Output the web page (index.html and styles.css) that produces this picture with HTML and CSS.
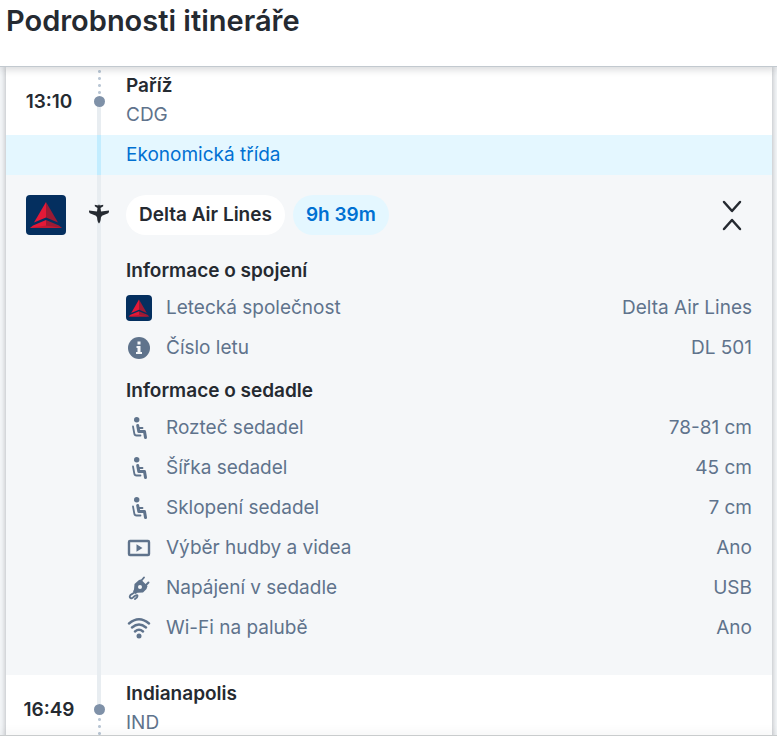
FILE: index.html
```html
<!DOCTYPE html>
<html lang="cs">
<head>
  <meta charset="UTF-8">
  <meta name="viewport" content="width=device-width, initial-scale=1.0">
  <title>Podrobnosti itineráře</title>
  <link rel="stylesheet" href="styles.css">
</head>
<body>
  <svg class="sprite" aria-hidden="true">
    <symbol id="delta" viewBox="0 0 40 40">
      <path d="M0 0h40v40H0z" fill="#042f5f"/>
      <path d="M20 7 8 27.500 20 22.500Z" fill="#e31937"/>
      <path d="M20 7 32 27.500 20 22.500Z" fill="#9b1b34"/>
      <path d="M20 25 7 30.500 4 33h16Z" fill="#e31937"/>
      <path d="M20 25 33 30.500 36 33H20Z" fill="#9b1b34"/>
      <path d="M4 33 20 30.500 36 33Z" fill="#c01933"/>
    </symbol>
    <symbol id="seat" viewBox="0 0 26 26">
      <circle cx="10.700" cy="4.700" r="2.700"/>
      <path d="M11.700 10.500 12.800 16.500H18.500L19.500 22.500" fill="none" stroke="currentColor" stroke-width="3" stroke-linecap="round" stroke-linejoin="round"/>
      <path d="M12.500 13h4M7 11.500 8.300 18.500Q8.600 20.500 10.500 20.500H14.500" fill="none" stroke="currentColor" stroke-width="1.800" stroke-linecap="round"/>
    </symbol>
  </svg>

  <header class="header">
    <h1 class="title">Podrobnosti itineráře</h1>
  </header>

  <main class="content">
    <div class="card">
      <section class="row">
        <div class="side"><time class="time">13:10</time></div>
        <div class="rail"><span class="dots"></span><span class="dot"></span><span class="line"></span></div>
        <div class="stop">
          <p class="city">Paříž</p>
          <p class="code">CDG</p>
        </div>
      </section>

      <div class="row cabin">
        <div class="side"></div>
        <div class="rail"><span class="line"></span></div>
        <p class="cabinName">Ekonomická třída</p>
      </div>

      <section class="row segment">
        <div class="side">
          <svg class="logo" role="img" aria-label="Delta Air Lines"><use href="#delta"/></svg>
        </div>
        <div class="rail">
          <span class="line"></span>
          <svg class="plane" viewBox="0 0 20 20" aria-hidden="true">
            <path d="M10 19.500c-1.100-1-1.800-3-1.900-6L7 11.800.8 9.300Q-.2 8.300 0 6.500L8 7.500 8.500 4 5.800 2.300V.800L9.200 1.400 10 .3l.8 1.100 3.400-.6V2.300L11.500 4 12 7.500l8-1q.2 1.800-.8 2.800L13 11.800l-1.100 1.700C11.800 16.500 11.100 18.500 10 19.500Z"/>
          </svg>
        </div>
        <div class="details">
          <div class="summary">
            <span class="pill">Delta Air Lines</span>
            <span class="pill duration">9h 39m</span>
            <button class="toggle" type="button" aria-label="Sbalit">
              <svg viewBox="0 0 24 32"><path d="m4 3 8 9 8-9M4 30l8-9 8 9"/></svg>
            </button>
          </div>

          <h2 class="groupTitle">Informace o spojení</h2>
          <dl class="list">
            <div class="item">
              <dt><svg class="icon airline"><use href="#delta"/></svg>Letecká společnost</dt>
              <dd>Delta Air Lines</dd>
            </div>
            <div class="item">
              <dt>
                <svg class="icon" viewBox="0 0 26 26"><circle cx="13" cy="13" r="11"/><path d="M11.500 6.500h3v3h-3zM10.500 11h4v6h1.500v2h-6v-2h1.500v-4h-1z" fill="#f5f7f9"/></svg>
                Číslo letu
              </dt>
              <dd>DL 501</dd>
            </div>
          </dl>

          <h2 class="groupTitle">Informace o sedadle</h2>
          <dl class="list">
            <div class="item">
              <dt><svg class="icon"><use href="#seat"/></svg>Rozteč sedadel</dt>
              <dd>78-81 cm</dd>
            </div>
            <div class="item">
              <dt><svg class="icon"><use href="#seat"/></svg>Šířka sedadel</dt>
              <dd>45 cm</dd>
            </div>
            <div class="item">
              <dt><svg class="icon"><use href="#seat"/></svg>Sklopení sedadel</dt>
              <dd>7 cm</dd>
            </div>
            <div class="item">
              <dt>
                <svg class="icon" viewBox="0 0 26 26"><rect x="3" y="6" width="20" height="14" rx="1" fill="none" stroke="currentColor" stroke-width="2.400"/><path d="M10.500 9.200v7.600l6-3.800z"/></svg>
                Výběr hudby a videa
              </dt>
              <dd>Ano</dd>
            </div>
            <div class="item">
              <dt>
                <svg class="icon" viewBox="0 0 26 26">
                  <path d="M13 5 15 4.500 21.500 11 20.500 14 17 17.500 11.500 17.800 9.500 19 7 16.500 8 14.500 8.500 9Z"/>
                  <path d="M15 6l3-3.500M19.500 10.500l3-3M8.500 17.500 4.500 20q-1.500 2 0 3t3-1l2-1.500q2-1 2 .5t-2.500 3" fill="none" stroke="currentColor" stroke-width="1.900" stroke-linecap="round"/>
                  <circle cx="14" cy="12" r="2" fill="#f5f7f9"/>
                </svg>
                Napájení v sedadle
              </dt>
              <dd>USB</dd>
            </div>
            <div class="item">
              <dt>
                <svg class="icon" viewBox="0 0 26 26"><g fill="none" stroke="currentColor" stroke-width="2.400" stroke-linecap="round"><path d="M3 8.500q10-8.500 20 0M6 12.500q7-6 14 0M9 16.500q4-3.500 8 0"/></g><circle cx="13" cy="21" r="2.500"/></svg>
                Wi-Fi na palubě
              </dt>
              <dd>Ano</dd>
            </div>
          </dl>
        </div>
      </section>

      <section class="row">
        <div class="side"><time class="time">16:49</time></div>
        <div class="rail"><span class="line"></span><span class="dot"></span><span class="dots"></span></div>
        <div class="stop">
          <p class="city">Indianapolis</p>
          <p class="code">IND</p>
        </div>
      </section>
    </div>
  </main>
  <footer class="footer"></footer>
</body>
</html>
```

FILE: styles.css
```css
* {
  box-sizing: border-box;
}

html, body {
  margin: 0;
  height: 100%;
}

body {
  display: flex;
  flex-direction: column;
  overflow: hidden;
  font-family: Inter, "Liberation Sans", sans-serif;
  font-size: 19px;
  line-height: 29px;
  color: #252a31;
  background-color: #f5f7f9;
}

h1, h2, p, dl, dd {
  margin: 0;
}

.sprite {
  display: none;
}

.header {
  position: relative;
  z-index: 1;
  padding: 3px 6px 27px;
  background-color: #fff;
  border-bottom: 1px solid #c2c9cf;
  box-shadow: 0 2px 8px rgba(37, 42, 49, 0.2);
}

.title {
  font-size: 29px;
  line-height: 36px;
  font-weight: 600;
}

.content {
  flex: 1;
  min-height: 0;
  padding: 0 5px 0 6px;
  overflow: hidden;
}

.card {
  background-color: #fff;
  box-shadow: 0 0 6px rgba(37, 42, 49, 0.35);
}

.footer {
  position: relative;
  height: 1px;
  background-color: #c9cccd;
  box-shadow: 0 0 10px rgba(37, 42, 49, 0.35);
}

.row {
  display: grid;
  grid-template-columns: 86px 14px 1fr;
  padding-right: 20px;
}

.side {
  display: flex;
  align-items: center;
  justify-content: center;
}

.time,
.city,
.groupTitle {
  font-weight: 600;
}

.rail {
  display: flex;
  flex-direction: column;
  align-items: center;
}

.line {
  flex: 1;
  width: 4px;
  background-color: #e8edf1;
}

.dot {
  width: 11px;
  height: 11px;
  border-radius: 50%;
  background-color: #7f91a8;
}

.dots {
  flex: 1;
  width: 3px;
  background: radial-gradient(circle, #bac7d5 1px, transparent 2px) 0 1px / 3px 7px;
}

.stop {
  padding: 4px 0 6px 20px;
}

.code {
  color: #5f738c;
}

.cabin {
  background-color: #e4f7ff;
}

.cabin .line {
  background-color: #c3edff;
}

.cabinName {
  padding-left: 20px;
  line-height: 40px;
  color: #0070d2;
}

.segment {
  background-color: #f5f7f9;
}

.segment .side {
  align-items: flex-start;
  justify-content: flex-start;
  padding: 20px 0 0 20px;
}

.segment .rail {
  position: relative;
}

.logo {
  width: 40px;
  height: 40px;
  border-radius: 4px;
}

.plane {
  position: absolute;
  top: 29px;
  width: 20px;
  height: 20px;
  fill: #252a31;
}

.details {
  padding: 20px 0 27px 20px;
}

.summary {
  display: flex;
  gap: 8px;
  margin-bottom: 13px;
}

.pill {
  padding: 0 13px;
  border-radius: 20px;
  line-height: 40px;
  font-weight: 600;
  background-color: #fff;
}

.duration {
  color: #0070d2;
  background-color: #e4f7ff;
}

.toggle {
  display: flex;
  align-items: center;
  justify-content: center;
  width: 40px;
  height: 40px;
  margin-left: auto;
  padding: 0;
  border: 0;
  background: none;
  cursor: pointer;
}

.toggle svg {
  width: 24px;
  height: 32px;
  fill: none;
  stroke: #252a31;
  stroke-width: 2.500;
  stroke-linecap: round;
  stroke-linejoin: round;
}

.groupTitle {
  padding-top: 6px;
  font-size: 19px;
  line-height: 34px;
}

.item {
  display: flex;
  justify-content: space-between;
  line-height: 40px;
  color: #5f738c;
}

.item dt {
  display: flex;
  align-items: center;
  gap: 14px;
}

.icon {
  width: 26px;
  height: 26px;
  fill: currentColor;
}

.airline {
  border-radius: 4px;
}
```
